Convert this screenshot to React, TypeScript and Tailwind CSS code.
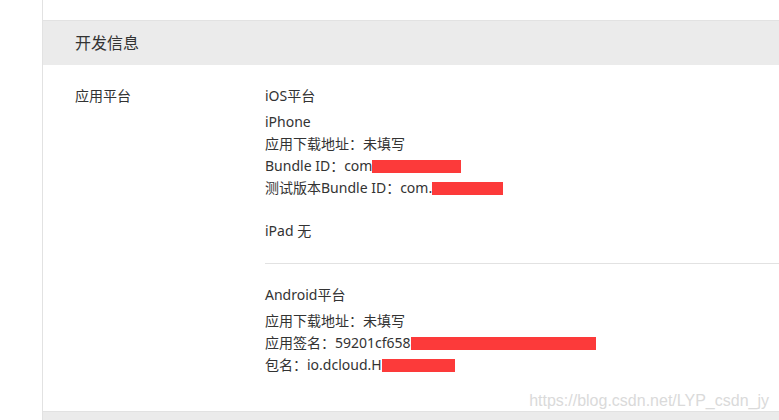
const font = { fontFamily: '"Noto Sans", "Noto Sans CJK SC", sans-serif' };

function Redact({ w }: { w: string }) {
  return <span className={`inline-block h-[13px] bg-[#fc3a3a] align-[-2px] ${w}`} />;
}

export default function App() {
  return (
    <div className="relative flex h-[420px] w-[779px] overflow-hidden bg-white text-[14px] text-[#333]" style={font}>
      <div className="w-[42px] shrink-0" />
      <div className="flex flex-1 flex-col border-l border-[#e2e2e2]">
        <div className="h-[20px] shrink-0" />
        <div className="flex h-[45px] shrink-0 items-center border-t border-[#e2e2e2] bg-[#ebebeb] pl-[32px] text-[16px]">
          开发信息
        </div>
        <div className="flex flex-1 pl-[32px] pt-[20px]">
          <div className="w-[190px] shrink-0 leading-[22px]">应用平台</div>
          <div className="flex-1">
            <div className="leading-[22px]">iOS平台</div>
            <div className="mt-[4px] leading-[22px]">iPhone</div>
            <div className="leading-[22px]">应用下载地址：未填写</div>
            <div className="leading-[22px]">
              Bundle ID：com<Redact w="w-[89px]" />
            </div>
            <div className="leading-[22px]">
              测试版本Bundle ID：com.<Redact w="w-[71px]" />
            </div>
            <div className="mt-[21px] leading-[22px]">iPad 无</div>
            <div className="mt-[21px] h-px bg-[#e2e2e2]" />
            <div className="mt-[20px] leading-[22px]">Android平台</div>
            <div className="mt-[4px] leading-[22px]">应用下载地址：未填写</div>
            <div className="leading-[22px]">
              应用签名：59201cf658<Redact w="w-[185px]" />
            </div>
            <div className="leading-[22px]">
              包名：io.dcloud.H<Redact w="w-[73px]" />
            </div>
          </div>
        </div>
        <div className="h-[9px] shrink-0 border-t border-[#e2e2e2] bg-[#ebebeb]" />
      </div>
      <div
        className="absolute right-[10px] top-[389px] text-[16px] text-[#dadada]"
        style={{ fontFamily: '"Liberation Sans", Arial, sans-serif' }}
      >
        https://blog.csdn.net/LYP_csdn_jy
      </div>
    </div>
  );
}
